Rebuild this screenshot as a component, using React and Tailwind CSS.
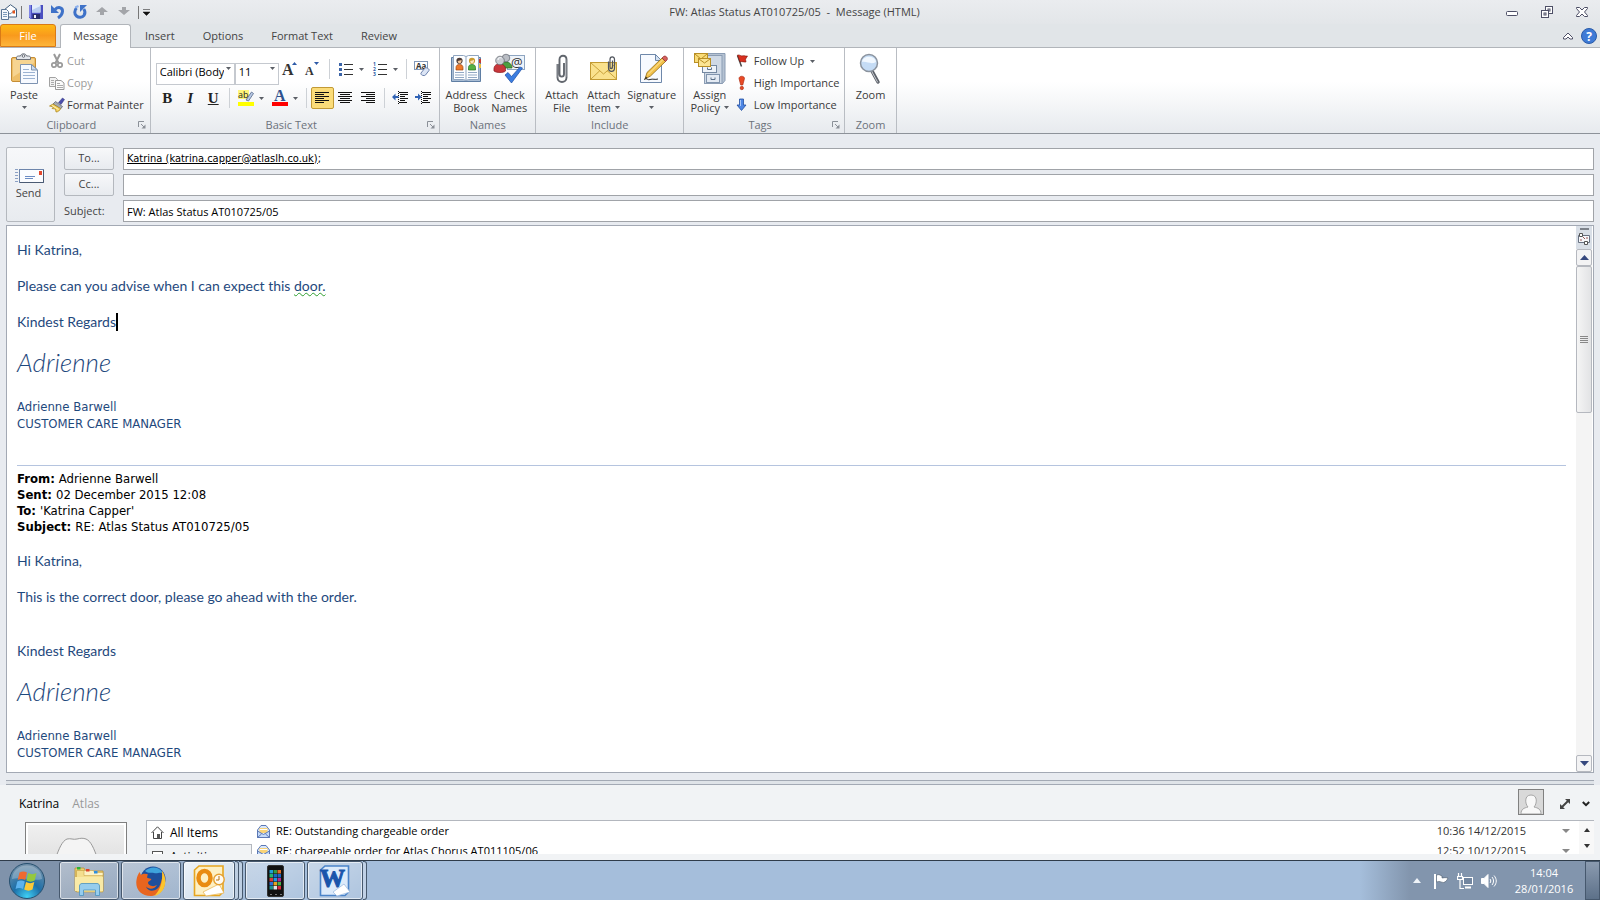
import { useState } from "react";

const uiFont = "font-['Open_Sans','Noto_Sans',sans-serif]";
const tahoma = "font-['DejaVu_Sans_Condensed','DejaVu_Sans',sans-serif]";
const calibri = "font-['Lato',sans-serif]";

const Caret = ({ className = "" }) => (
  <svg className={`h-[3px] w-[5px] shrink-0 ${className}`} viewBox="0 0 5 3">
    <path d="M0 0h5L2.5 3z" fill="#5b5f66" />
  </svg>
);

/* ---------- quick access icons ---------- */

const MailDocIcon = () => (
  <svg className="h-4 w-4" viewBox="0 0 16 16">
    <path d="M3 6 9.500 .7 15.500 5v8H3z" fill="#fff" stroke="#44607f" />
    <path d="m3 6 6 4 6.500-5" fill="none" stroke="#6f8dae" />
    <rect x="11.500" y="6.500" width="2.500" height="3" fill="#e2541b" />
    <path d="M.5 5.500h5l2 2v8h-7z" fill="#f4f8fc" stroke="#5a7594" />
    <path d="M2 8.500h4M2 10.500h4M2 12.500h4" stroke="#7f9cbb" />
  </svg>
);

const SaveIcon = () => (
  <svg className="h-4 w-4" viewBox="0 0 16 16">
    <path d="M1 1h14v14H2.500L1 13.500z" fill="#4a4fc0" />
    <path d="M1 1h2v13.500L1 13z" fill="#7f86e6" />
    <rect x="4" y="1" width="8.500" height="7.500" fill="#e4eefb" />
    <path d="M4 6 12.500 2v6.500H4z" fill="#b8cdf0" />
    <rect x="4.500" y="10" width="7.500" height="5" fill="#2a2f6d" />
    <rect x="6" y="11" width="2" height="3" fill="#f3f5fa" />
  </svg>
);

const UndoIcon = () => (
  <svg className="h-4 w-4" viewBox="0 0 16 16">
    <path d="M5 5.500C8 2.500 12.800 3 12.500 7.500c-.2 2.500-1.700 4.700-4.500 6.500" fill="none" stroke="#3f72c8" strokeWidth="3" />
    <path d="M1 1v8h8z" fill="#3f72c8" />
  </svg>
);

const RedoIcon = () => (
  <svg className="h-4 w-4" viewBox="0 0 16 16">
    <path d="M4.500 4C2.200 6.500 2.200 10 4.500 12c2.200 1.900 5.800 1.700 7.500-.6 1.500-2.200 1.200-4.400-.2-6.400" fill="none" stroke="#3f72c8" strokeWidth="3" />
    <path d="M8 1h7L8 8z" fill="#3f72c8" />
    <path d="M3.200 3.500 6.500 2" stroke="#8cb0ec" strokeWidth="2" />
  </svg>
);

const ArrowBlock = ({ down }) => (
  <svg className="h-3 w-3" viewBox="0 0 12 12">
    <path
      d={down ? "M4 1h4v3h4L6 9 0 4h4z" : "M4 9h4V6h4L6 1 0 6h4z"}
      fill="#a3a5a9"
    />
  </svg>
);

/* ---------- ribbon icons ---------- */

const PasteIcon = () => (
  <svg className="h-8 w-8" viewBox="0 0 32 32">
    <rect x="3.500" y="4.500" width="24" height="24" rx="1.500" fill="#eebf6a" stroke="#c58d35" />
    <path d="M5 6h21v4L5 24z" fill="#f6d491" />
    <path d="M8.500 6.500V4.500c0-1 1-1.500 2-1.500h2c.5-3 5.500-3 6 0h2c1 0 2 .5 2 1.500v2z" fill="#e4e7ec" stroke="#6b7079" />
    <circle cx="15.500" cy="3" r="1.300" fill="#fff" stroke="#6b7079" />
    <path d="M12.500 11.500h11l6 5.500v13.500h-17z" fill="#f7faff" stroke="#7d93b1" />
    <path d="M23.500 11.500V17h6z" fill="#cddcf0" stroke="#7d93b1" />
    <path d="M15 16.500h6M15 19.500h12M15 22.500h12M15 25.500h12" stroke="#9cb3d2" />
  </svg>
);

const CutIcon = () => (
  <svg className="h-4 w-4" viewBox="0 0 16 16" fill="none" stroke="#9a9a9a">
    <path d="m5 1 4.500 9M11 1 6.500 10" strokeWidth="2" />
    <circle cx="5" cy="12" r="2.200" strokeWidth="1.700" />
    <circle cx="11" cy="12" r="2.200" strokeWidth="1.700" />
  </svg>
);

const CopyIcon = () => (
  <svg className="h-4 w-4" viewBox="0 0 16 16">
    <path d="M.5 2.500h6l2 2v7h-8z" fill="#f2f2f2" stroke="#a2a2a2" />
    <path d="M6.500 5.500h5.500l3 2.500v6.500H6.500z" fill="#fbfbfb" stroke="#999" />
    <path d="M2 5.500h3M2 7.500h3M2 9.500h3M8 8.500h3M8 10.500h6M8 12.500h6" stroke="#aaa" />
  </svg>
);

const PainterIcon = () => (
  <svg className="h-4 w-4" viewBox="0 0 16 16">
    <path d="m9.500 5.500 4-4.500 2 1.500-3.500 5z" fill="#4b4fae" stroke="#2d2f77" strokeWidth=".5" />
    <path d="m6.500 4.500 7 5-2 2.500-7.500-5z" fill="#a4a9b1" stroke="#555b65" strokeWidth=".7" />
    <path d="M4 7 .5 9l4 1-1.500 1.500 3.500.5L7 15c2 0 4-1.500 4.500-3.500z" fill="#f4d05c" stroke="#a58018" strokeWidth=".7" />
    <path d="m3 8.500 6.500 4" stroke="#fff3b8" />
  </svg>
);

const AddressBookIcon = () => (
  <svg className="h-8 w-8" viewBox="0 0 32 32">
    <path d="M1.500 4.500h29v24h-29z" fill="#a9bdd4" stroke="#5f7ea3" />
    <path d="M3.500 2.500h10l2.500 1 2.500-1h10v24h-10l-2.500 1-2.500-1h-10z" fill="#fdfeff" stroke="#8fa5c0" />
    <path d="M16 3.500v24" stroke="#8fa5c0" />
    <path d="M29 6h2v4h-2z" fill="#c83a2c" />
    <path d="M29 11h2v4h-2z" fill="#edc041" />
    <path d="M6 17v-2.500c0-2 1.300-3 3.500-3s3.500 1 3.500 3V17z" fill="#ef7a2a" stroke="#9e4713" strokeWidth=".7" />
    <circle cx="9.500" cy="7.800" r="3.100" fill="#4b3a35" />
    <path d="M7.700 8c1.500 0 2.800-.5 3.800-1.200.6 4-3.600 5.200-3.800 1.200z" fill="#f6c99e" />
    <path d="M18.500 17v-2.500c0-2 1.300-3 3.500-3s3.500 1 3.500 3V17z" fill="#56b043" stroke="#24701f" strokeWidth=".7" />
    <circle cx="22" cy="7.800" r="3.100" fill="#c99a2e" />
    <path d="M20.200 8c1.500 0 2.800-.5 3.800-1.200.6 4-3.600 5.200-3.800 1.200z" fill="#fbe3c0" />
    <path d="M5 19.500h9M5 22h9M5 24.500h9M18 19.500h9M18 22h9M18 24.500h9" stroke="#93a9c4" />
  </svg>
);

const CheckNamesIcon = () => (
  <svg className="h-8 w-8" viewBox="0 0 32 32">
    <rect x="14.500" y="2.500" width="17" height="14" fill="#eef4fb" stroke="#8ea5c1" />
    <path d="M8 15c0-4 2-6 5-6s6 2 6 6z" fill="#4c9e41" stroke="#236a20" strokeWidth=".7" />
    <circle cx="13" cy="5" r="3.800" fill="#b9bdc4" stroke="#5e636b" strokeWidth=".7" />
    <path d="M1 18c-.5-5 1.500-7 5.500-7s6.500 2 6 7c-2 2-9 2-11.500 0z" fill="#c9373b" stroke="#86171d" strokeWidth=".7" />
    <circle cx="7" cy="7.500" r="4.300" fill="#c9cdd3" stroke="#5e636b" strokeWidth=".7" />
    <path d="M5 7c0-2 2-3 3.500-2" stroke="#fff" fill="none" />
    <text x="18" y="13.500" fontSize="13" fontFamily="Open Sans" fill="#333">@</text>
    <path d="m12 22 3-2.500 3.500 4L27 14l2.500 1-11 15z" fill="#3b7de0" stroke="#1e4fa5" strokeWidth=".7" />
  </svg>
);

const ClipIcon = () => (
  <svg className="h-8 w-8" viewBox="0 0 32 32" fill="none">
    <path d="M11.500 11v13.500c0 6 9 6 9 0V6.500c0-5-7-5-7 0V21c0 3.500 4.500 3.500 4.500 0V10" stroke="#61666d" strokeWidth="1.900" />
    <path d="M11 11v13.500M20 6.500V24" stroke="#b9bdc4" strokeWidth=".6" />
  </svg>
);

const AttachItemIcon = () => (
  <svg className="h-8 w-8" viewBox="0 0 32 32">
    <rect x="2.500" y="9.500" width="26" height="17" fill="#fae28d" stroke="#c29b33" />
    <path d="M3 26 12 17.500M28.500 26 19 17.500M3 10l12.500 11L28.500 10" fill="none" stroke="#c9a23b" />
    <path d="M20.500 8.500V15c0 4.500 6 4.500 6 0V6.500c0-3.500-4.500-3.500-4.500 0V14c0 2.200 2.500 2.200 2.500 0V7.500" fill="none" stroke="#4f545c" strokeWidth="1.200" />
  </svg>
);

const SignatureIcon = () => (
  <svg className="h-8 w-8" viewBox="0 0 32 32">
    <path d="M4.500 1.500h15l6 6v22h-21z" fill="#f7faff" stroke="#6e88aa" />
    <path d="M19.500 1.500v6h6z" fill="#d3e0f1" stroke="#6e88aa" />
    <path d="M8 26.500c3-2 3 1 6 0s5 .5 8-.5" fill="none" stroke="#2a2a2a" />
    <path d="m9 26 2-6.500L26 5l3.500 3.500L14.500 23z" fill="#f2c14a" stroke="#8f6a14" strokeWidth=".8" />
    <path d="m12 21.500 15-15" stroke="#fde9a6" />
    <path d="m26 5 1.500-1.500c2-1.500 5 1.500 3.500 3.500l-1.500 1.500z" fill="#d4605d" stroke="#8c2b2a" strokeWidth=".7" />
    <path d="m9 26 .8-2.500 1.700 1.700z" fill="#222" />
  </svg>
);

const PolicyIcon = () => (
  <svg className="h-8 w-8" viewBox="0 0 32 32">
    <path d="M10.500 2.500 13 .5h18v27l-2.500 3h-18z" fill="#b5c2d2" stroke="#8b9db4" />
    <rect x="10.500" y="2.500" width="17.500" height="28" fill="#cfd9e5" stroke="#8b9db4" />
    <rect x="8.500" y="12.500" width="14" height="7" fill="#eef3f9" stroke="#7488a1" />
    <path d="M13.500 14.500v2h4v-2" fill="none" stroke="#5b7089" />
    <rect x="12.500" y="21.500" width="13" height="8" fill="#e3eaf3" stroke="#8094ad" />
    <path d="M17 24.500v2h4v-2" fill="none" stroke="#5b7089" />
    <rect x=".5" y=".5" width="13" height="9" fill="#f9dc78" stroke="#b98f25" />
    <path d="m1 1 6 5 6-5" fill="none" stroke="#b98f25" />
    <rect x="4.500" y="5.500" width="12" height="8" fill="#fbe594" stroke="#b98f25" />
    <path d="m5 6 5.500 4L16 6" fill="none" stroke="#b98f25" />
  </svg>
);

const FlagIcon = () => (
  <svg className="h-4 w-4" viewBox="0 0 16 16">
    <path d="m1.500 2.500 4 11" stroke="#4a4a4a" strokeWidth="1.500" />
    <path d="M1.500 2c2.500-.5 3.500 1.500 5.500.8C9 2.200 9 3.500 11.500 3l-2 3.200L10 9C8 9.500 6.500 8 4 9z" fill="#d9301f" stroke="#7c150c" strokeWidth=".6" />
  </svg>
);

const HighIcon = () => (
  <svg className="h-4 w-4" viewBox="0 0 16 16">
    <path d="M3 3.500C3 .5 8.500.5 8.500 3.500L6.800 10H4.700z" fill="#e84a26" stroke="#a5260d" strokeWidth=".6" />
    <circle cx="5.800" cy="13" r="1.700" fill="#e84a26" stroke="#a5260d" strokeWidth=".6" />
  </svg>
);

const LowIcon = () => (
  <svg className="h-4 w-4" viewBox="0 0 16 16">
    <path d="M3.500 2h4v6H10l-4.500 5.500L1 8h2.500z" fill="#4e86e4" stroke="#234f9f" strokeWidth=".8" />
    <path d="M4.500 3v6" stroke="#a8c7f8" />
  </svg>
);

const ZoomIcon = () => (
  <svg className="h-8 w-8" viewBox="0 0 32 32">
    <path d="m17 18 6 11" stroke="#5d626a" strokeWidth="3.500" strokeLinecap="round" />
    <path d="m16.500 18 6 11" stroke="#c7cbd1" strokeLinecap="round" />
    <circle cx="14" cy="10" r="8.500" fill="#c5dcf5" stroke="#8b939e" strokeWidth="1.500" />
    <path d="M7 9c1-7 13-7 14 0-5 3-9-1-14 0z" fill="#f1f8ff" />
  </svg>
);

const FontSizeIcon = ({ grow }) => (
  <svg className="h-4 w-4 overflow-visible" viewBox="0 0 16 16">
    <text x="0" y="14" fontSize={grow ? 16 : 12} fontWeight="700" fontFamily="Liberation Serif" fill="#333">A</text>
    <path d={grow ? "M10 4h5l-2.500-3z" : "M9 1h5l-2.500 3z"} fill="#2d5aa8" />
  </svg>
);

const ListIcon = ({ numbered }) => (
  <svg className="h-4 w-4 overflow-visible" viewBox="0 0 16 16">
    {numbered ? (
      <g fontSize="5" fontFamily="Open Sans" fontWeight="700" fill="#2b57a4">
        <text x="1" y="5">1</text>
        <text x="1" y="10">2</text>
        <text x="1" y="15">3</text>
      </g>
    ) : (
      <path d="M1 2h3v3H1zM1 7h3v3H1zM1 12h3v3H1z" fill="#3b64a8" />
    )}
    <path d="M6 3.500h9M6 8.500h9M6 13.500h9" stroke="#333" />
  </svg>
);

const ClearIcon = () => (
  <svg className="h-4 w-4 overflow-visible" viewBox="0 0 16 16">
    <rect x=".5" y=".5" width="13" height="8" fill="#fff" stroke="#8298b8" />
    <text x="2" y="7.500" fontSize="8" fontWeight="700" fontFamily="Open Sans" fill="#333">Aa</text>
    <path d="m7 12 4-5c1-1 5 1 4 2.500L11.500 14c-1 1.500-5.500 0-4.500-2z" fill="#dce5f5" stroke="#6c82ad" />
  </svg>
);

const HighlightIcon = () => (
  <svg className="h-4 w-4 overflow-visible" viewBox="0 0 16 16">
    <rect x="0" y="0" width="11" height="9" fill="#fff67a" />
    <text x="0" y="8" fontSize="9" fontFamily="Open Sans" fill="#222">ab</text>
    <path d="m8 10 5.500-8 2 1.500L10.500 11z" fill="#b8c8e4" stroke="#56698c" strokeWidth=".8" />
    <rect x="0" y="12" width="16" height="4" fill="#ff0" />
  </svg>
);

const FontColorIcon = () => (
  <svg className="h-4 w-4 overflow-visible" viewBox="0 0 16 16">
    <text x="2" y="11" fontSize="16" fontWeight="700" fontFamily="Liberation Serif" fill="#2f528f">A</text>
    <rect x="0" y="12" width="16" height="4" fill="#f00" />
  </svg>
);

const alignPaths = {
  left: "M1 2.500h14M1 4.500h9M1 6.500h14M1 8.500h9M1 10.500h14M1 12.500h9",
  center: "M1 2.500h14M3 4.500h10M1 6.500h14M3 8.500h10M1 10.500h14M3 12.500h10",
  right: "M1 2.500h14M6 4.500h9M1 6.500h14M6 8.500h9M1 10.500h14M6 12.500h9",
};

const AlignIcon = ({ side }) => (
  <svg className="h-4 w-4" viewBox="0 0 16 16">
    <path d={alignPaths[side]} stroke="#111" />
  </svg>
);

const IndentIcon = ({ increase }) => (
  <svg className="h-4 w-4" viewBox="0 0 16 16">
    <path d="M7 2.500h9M8 4.500h8M8 6.500h5M8 8.500h8M8 10.500h5M7 12.500h8" stroke="#111" />
    <path d="M6.500 1v14" stroke="#111" strokeDasharray="1 1" />
    <path d={increase ? "M0 6h3V3.500L6.500 7 3 10.500V8H0z" : "M6.500 6h-3V3.500L0 7l3.500 3.500V8h3z"} fill="#2f62b5" />
  </svg>
);

const LauncherIcon = () => (
  <svg className="h-2 w-2" viewBox="0 0 8 8">
    <path d="M.5 6V.5H6M3 3l3 3" fill="none" stroke="#8b9098" />
    <path d="M7.500 3.500v4h-4z" fill="#8b9098" />
  </svg>
);

/* ---------- ribbon pieces ---------- */

const Group = ({ label, launcher, children }) => (
  <section className="flex flex-col border-r border-[#b9bdc3] pr-1 pl-[5px]">
    <div className="flex h-[69px]">{children}</div>
    <div className="flex h-4 items-center">
      <h2 className="flex-1 text-center text-[11px] leading-4 font-normal text-[#6c727b]">{label}</h2>
      {launcher && (
        <button type="button" aria-label={`${label} options`}>
          <LauncherIcon />
        </button>
      )}
    </div>
  </section>
);

const BigButton = ({ icon, lines, caret, width = "w-[43px]" }) => (
  <button type="button" className={`flex ${width} flex-col items-center pt-[5px]`}>
    {icon}
    <span className="mt-[3px] text-[11px] leading-[13px] whitespace-nowrap">{lines[0]}</span>
    <span className="flex h-[13px] items-center gap-1 text-[11px] leading-[13px] whitespace-nowrap">
      {lines[1]}
      {caret && <Caret />}
    </span>
  </button>
);

const SmallButton = ({ icon, label, caret, disabled }) => (
  <button
    type="button"
    disabled={disabled}
    className="flex h-[22px] items-center gap-[2px] text-[11px] whitespace-nowrap disabled:text-[#9b9b9b]"
  >
    {icon}
    {label}
    {caret && <Caret className="ml-1" />}
  </button>
);

const Tool = ({ label, caret, active, onClick, children }) => (
  <button
    type="button"
    aria-label={label}
    onClick={onClick}
    className={`flex h-[22px] items-center justify-center rounded-[2px] ${caret ? "w-[34px] gap-[5px]" : "w-[23px]"} ${
      active ? "border border-[#c29a35] bg-[#fbdc79]" : ""
    }`}
  >
    {children}
    {caret && <Caret />}
  </button>
);

const Sep = () => (
  <span className="flex w-[9px] justify-center">
    <span className="h-5 w-px bg-[#cdd1d6]" />
  </span>
);

const Picker = ({ label, value, width }) => (
  <div className={`relative h-[22px] ${width}`}>
    <select
      aria-label={label}
      defaultValue={value}
      className="h-full w-full appearance-none overflow-hidden border border-[#c5c9cf] bg-white pr-[10px] pb-1 pl-[3px] text-[11px] text-black"
    >
      <option>{value}</option>
    </select>
    <Caret className="pointer-events-none absolute top-[9px] right-1" />
  </div>
);

const Ribbon = () => {
  const [align, setAlign] = useState("left");

  return (
    <div className="flex h-[86px] shrink-0 border-b border-[#8d9299] bg-linear-to-b from-white from-40% to-[#e7eaee]">
      <Group label="Clipboard" launcher>
        <BigButton icon={<PasteIcon />} lines={["Paste"]} caret width="w-[38px]" />
        <div className="ml-[6px] pt-[2px] pr-[2px]">
          <SmallButton icon={<CutIcon />} label="Cut" disabled />
          <SmallButton icon={<CopyIcon />} label="Copy" disabled />
          <SmallButton icon={<PainterIcon />} label="Format Painter" />
        </div>
      </Group>
      <Group label="Basic Text" launcher>
        <div className="flex flex-col gap-[7px] pt-[10px]">
          <div className="flex items-center">
            <Picker label="Font" value="Calibri (Body)" width="w-[79px]" />
            <Picker label="Font size" value="11" width="w-11" />
            <Tool label="Grow font"><FontSizeIcon grow /></Tool>
            <Tool label="Shrink font"><FontSizeIcon /></Tool>
            <Sep />
            <Tool label="Bullets" caret><ListIcon /></Tool>
            <Tool label="Numbering" caret><ListIcon numbered /></Tool>
            <Sep />
            <Tool label="Clear formatting"><ClearIcon /></Tool>
          </div>
          <div className="flex items-center font-['Liberation_Serif',serif] text-[15px] text-[#222]">
            <Tool label="Bold"><b>B</b></Tool>
            <Tool label="Italic"><b className="italic">I</b></Tool>
            <Tool label="Underline"><b className="underline">U</b></Tool>
            <Sep />
            <Tool label="Highlight" caret><HighlightIcon /></Tool>
            <Tool label="Font colour" caret><FontColorIcon /></Tool>
            <Sep />
            {["left", "center", "right"].map((side) => (
              <Tool key={side} label={`Align ${side}`} active={align === side} onClick={() => setAlign(side)}>
                <AlignIcon side={side} />
              </Tool>
            ))}
            <Sep />
            <Tool label="Decrease indent"><IndentIcon /></Tool>
            <Tool label="Increase indent"><IndentIcon increase /></Tool>
          </div>
        </div>
      </Group>
      <Group label="Names">
        <BigButton icon={<AddressBookIcon />} lines={["Address", "Book"]} />
        <BigButton icon={<CheckNamesIcon />} lines={["Check", "Names"]} />
      </Group>
      <Group label="Include">
        <BigButton icon={<ClipIcon />} lines={["Attach", "File"]} width="w-[42px]" />
        <BigButton icon={<AttachItemIcon />} lines={["Attach", "Item"]} caret width="w-[42px]" />
        <BigButton icon={<SignatureIcon />} lines={["Signature"]} caret width="w-[54px]" />
      </Group>
      <Group label="Tags" launcher>
        <BigButton icon={<PolicyIcon />} lines={["Assign", "Policy"]} caret width="w-[42px]" />
        <div className="ml-[5px] pt-[2px]">
          <SmallButton icon={<FlagIcon />} label="Follow Up" caret />
          <SmallButton icon={<HighIcon />} label="High Importance" />
          <SmallButton icon={<LowIcon />} label="Low Importance" />
        </div>
      </Group>
      <Group label="Zoom">
        <BigButton icon={<ZoomIcon />} lines={["Zoom"]} width="w-[42px]" />
      </Group>
    </div>
  );
};

const TitleBar = () => (
  <header className="flex h-6 shrink-0 items-center bg-linear-to-b from-[#eaecef] to-[#e3e6e9] px-px">
    <div className="flex flex-1 items-center">
      <MailDocIcon />
      <span className="mr-[6px] ml-1 h-[13px] w-px bg-[#777]" />
      <div className="flex items-center gap-[6px]">
        <button type="button" aria-label="Save"><SaveIcon /></button>
        <button type="button" aria-label="Undo"><UndoIcon /></button>
        <button type="button" aria-label="Redo"><RedoIcon /></button>
        <button type="button" aria-label="Previous item" className="px-[2px]"><ArrowBlock /></button>
        <button type="button" aria-label="Next item" className="px-[2px]"><ArrowBlock down /></button>
      </div>
      <span className="mr-1 ml-[6px] h-[13px] w-px bg-[#777]" />
      <button type="button" aria-label="Customise toolbar">
        <svg className="h-[7px] w-[7px]" viewBox="0 0 7 7">
          <path d="M0 .5h7M0 3h7L3.500 6.500z" fill="#111" stroke="#111" strokeWidth=".5" />
        </svg>
      </button>
    </div>
    <h1 className="text-[11px] font-normal whitespace-pre text-[#444]">FW: Atlas Status AT010725/05  -  Message (HTML)</h1>
    <div className="flex flex-1 items-center justify-end gap-[23px] pr-[11px]">
      <button type="button" aria-label="Minimise">
        <svg className="h-3 w-3" viewBox="0 0 12 12"><rect x=".5" y="5.500" width="11" height="4" rx="1" fill="#fff" stroke="#4d4f66" /></svg>
      </button>
      <button type="button" aria-label="Restore">
        <svg className="h-3 w-3" viewBox="0 0 12 12" fill="#fff" stroke="#4d4f66">
          <rect x="4.500" y=".5" width="7" height="7" />
          <rect x="7" y="3" width="2" height="2" />
          <rect x=".5" y="4.500" width="7" height="7" />
          <rect x="3" y="7" width="2" height="2" />
        </svg>
      </button>
      <button type="button" aria-label="Close">
        <svg className="h-3 w-3" viewBox="0 0 12 12">
          <path d="M.5 1.500h3L6 4l2.500-2.500h3v1L8.500 6l3 3.500v1h-3L6 8l-2.500 2.500h-3v-1L3.500 6l-3-3.500z" fill="#fff" stroke="#4d4f66" />
        </svg>
      </button>
    </div>
  </header>
);

const Tabs = () => (
  <nav className="flex h-6 shrink-0 items-end border-b border-[#b1b5ba] bg-[#e1e5e8] text-[11px] text-[#444]">
    <button
      type="button"
      className="h-[23px] w-14 rounded-t-[3px] border border-[#d97a16] bg-linear-to-b from-[#fdb813] via-[#f99a1c] to-[#fdb53a] pt-px text-white"
    >
      File
    </button>
    <button
      type="button"
      className="-mb-px ml-1 h-6 w-[71px] rounded-t-[3px] border border-b-0 border-[#b1b5ba] bg-white"
    >
      Message
    </button>
    {["Insert", "Options", "Format Text", "Review"].map((tab) => (
      <button key={tab} type="button" className="h-[23px] px-[14px] pt-px">
        {tab}
      </button>
    ))}
    <div className="flex h-[23px] flex-1 items-center justify-end gap-2 pr-[3px]">
      <button type="button" aria-label="Minimise the ribbon">
        <svg className="h-2 w-[10px]" viewBox="0 0 10 8">
          <path d="M.5 5.500 5 1l4.500 4.500V7H7L5 5 3 7H.5z" fill="#fff" stroke="#4d4f66" />
        </svg>
      </button>
      <button type="button" aria-label="Help">
        <svg className="h-4 w-4" viewBox="0 0 16 16">
          <circle cx="8" cy="8" r="7.500" fill="#3f7bd6" stroke="#2a5ba8" />
          <text x="8" y="12.500" textAnchor="middle" fontSize="12" fontWeight="700" fontFamily="Open Sans" fill="#fff">?</text>
        </svg>
      </button>
    </div>
  </nav>
);

const boxButton =
  "rounded-[2px] border border-[#b4b8be] bg-linear-to-b from-[#f7f8fa] to-[#e8ebef] text-[11px] text-[#444]";
const field = "flex h-[22px] items-center border border-[#a0a3a8] bg-white px-[3px] text-[11px] text-black";

const AddressForm = () => (
  <form className="flex shrink-0 gap-[9px] px-[6px] pt-[13px] pb-[3px]" onSubmit={(e) => e.preventDefault()}>
    <button type="submit" className={`${boxButton} flex w-[49px] flex-col items-center justify-center pr-1`}>
      <svg className="h-4 w-[30px]" viewBox="0 0 30 16">
        <path d="M1 1.500h3M1 4.500h3M1 7.500h3M1 10.500h3M1 13.500h3" stroke="#8ba0c4" />
        <rect x="5.500" y="1.500" width="24" height="13" fill="#fbfcff" stroke="#6d85ab" />
        <path d="M29.500 2v12.500H6" fill="none" stroke="#4a5a73" />
        <rect x="25" y="3" width="3" height="4" fill="#e2492f" />
        <path d="M11 8.500h10M11 10.500h8" stroke="#6c8cc4" />
      </svg>
      <span className="leading-[18px]">Send</span>
    </button>
    <div className="grid flex-1 grid-cols-[50px_1fr] items-end gap-x-[9px] gap-y-[3px]">
      <button type="button" className={`${boxButton} h-[23px]`}>To...</button>
      <div className={`${field} ${tahoma}`}>
        <a href="mailto:katrina.capper@atlaslh.co.uk" className="underline">
          Katrina (katrina.capper@atlaslh.co.uk)
        </a>
        ;
        <input aria-label="To" className="min-w-0 flex-1 outline-none" />
      </div>
      <button type="button" className={`${boxButton} h-[23px]`}>Cc...</button>
      <input aria-label="Cc" className={field} />
      <label htmlFor="subject" className="flex h-[23px] items-center pt-px text-[11px] text-[#444]">Subject:</label>
      <input id="subject" defaultValue="FW: Atlas Status AT010725/05" className={field} />
    </div>
  </form>
);

const Signature = () => (
  <>
    <p className="mt-[17px] mb-[22px] text-[26px] leading-7 font-light italic">Adrienne</p>
    <p className={`${tahoma} text-[13px] leading-[17px]`}>
      Adrienne Barwell
      <br />
      CUSTOMER CARE MANAGER
    </p>
  </>
);

const quoted = [
  ["From:", "Adrienne Barwell"],
  ["Sent:", "02 December 2015 12:08"],
  ["To:", "'Katrina Capper'"],
  ["Subject:", "RE: Atlas Status AT010725/05"],
];

const ScrollBar = () => (
  <div className="mr-px flex w-4 shrink-0 flex-col bg-[#f4f4f4]">
    <div className="flex h-[23px] flex-col items-center gap-[3px] bg-[#d9dfe7] pt-[2px]">
      <span className="h-[2px] w-[9px] bg-[#7d828a]" />
      <svg className="h-3 w-3" viewBox="0 0 12 12">
        <path d="M.5 2.500h11v7H.5z" fill="#f5f7fa" stroke="#687181" />
        <path d="M1.500.5h3v3h-3zM6.500 8.500h3v3h-3z" fill="#fff" stroke="#555" />
        <path d="m5 4 2 2M9 4v2M3 6v2" stroke="#955" />
      </svg>
    </div>
    <button type="button" aria-label="Scroll up" className="flex h-[17px] items-center justify-center rounded-[2px] border border-[#b5b8bf] bg-[#f3f3f4]">
      <svg className="h-[5px] w-[9px]" viewBox="0 0 9 5"><path d="M4.500 0 9 5H0z" fill="#35477d" /></svg>
    </button>
    <div className="flex h-[147px] flex-col items-center justify-center gap-px rounded-[2px] border border-[#b5b8bf] bg-linear-to-r from-[#f5f5f5] to-[#e2e3e5]">
      <span className="h-px w-2 bg-[#888]" />
      <span className="h-px w-2 bg-[#888]" />
      <span className="h-px w-2 bg-[#888]" />
      <span className="h-px w-2 bg-[#888]" />
    </div>
    <div className="flex-1" />
    <button type="button" aria-label="Scroll down" className="flex h-[17px] items-center justify-center rounded-[2px] border border-[#b5b8bf] bg-[#f3f3f4]">
      <svg className="h-[5px] w-[9px]" viewBox="0 0 9 5"><path d="M0 0h9L4.500 5z" fill="#35477d" /></svg>
    </button>
  </div>
);

const MessageBody = () => (
  <main className="mx-[6px] flex min-h-0 flex-1 border border-[#a3a9b4] bg-white">
    <article className={`${calibri} min-w-0 flex-1 overflow-hidden px-[10px] pt-[15px] text-[14px] leading-[18px] text-[#1f497d]`}>
      <p>Hi Katrina,</p>
      <p className="mt-[18px]">
        Please can you advise when I can expect this{" "}
        <span className="underline decoration-[#2e9e2e] decoration-wavy decoration-1">door.</span>
      </p>
      <p className="mt-[18px] flex">
        Kindest Regards
        <span className="h-[18px] w-[2px] bg-black" />
      </p>
      <Signature />
      <hr className="mt-[33px] mb-[5px] border-[#b5c4df]" />
      <dl className={`${tahoma} text-[13px] leading-4 text-black`}>
        {quoted.map(([name, value]) => (
          <div key={name} className="flex gap-1">
            <dt className="font-bold">{name}</dt>
            <dd>{value}</dd>
          </div>
        ))}
      </dl>
      <p className="mt-[17px]">Hi Katrina,</p>
      <p className="mt-[18px]">This is the correct door, please go ahead with the order.</p>
      <p className="mt-9">Kindest Regards</p>
      <Signature />
    </article>
    <ScrollBar />
  </main>
);

/* ---------- people pane ---------- */

const OpenMailIcon = () => (
  <svg className="h-[13px] w-[13px] shrink-0" viewBox="0 0 13 13">
    <path d="M.5 5 4 .5h5L12.500 5v7.500H.5z" fill="#d8e6fa" stroke="#5c78b4" />
    <path d="M2.500 3h8v5h-8z" fill="#f9d377" />
    <path d="M3 4.500h7" stroke="#fff" />
    <path d="m.5 6 6 3.500 6-3.500v6.500H.5z" fill="#c4dafa" stroke="#5c78b4" />
    <path d="M.5 12.500 4.500 9M12.500 12.500 8.500 9" stroke="#5c78b4" />
  </svg>
);

const mails = [
  { subject: "RE: Outstanding chargeable order", time: "10:36 14/12/2015" },
  { subject: "RE: chargeable order for Atlas Chorus AT011105/06", time: "12:52 10/12/2015" },
];

const PeoplePane = () => (
  <section className="shrink-0 bg-[#f1f3f5] pb-[6px]">
    <div className="flex h-[35px] items-center pt-[2px] pr-[10px] pl-[19px] text-[12px]">
      <span className="text-black">Katrina</span>
      <span className="ml-[13px] flex-1 text-[#999]">Atlas</span>
      <svg className="mr-4 mb-1 h-[26px] w-[26px] border border-[#808080] bg-[#d9d9d9]" viewBox="0 0 24 24">
        <path d="M2 24c0-5 3-6 7-7-3-3-4-12 3-12s6 9 3 12c4 1 7 2 7 7z" fill="#f8f8f8" stroke="#a5a5a5" />
      </svg>
      <button type="button" aria-label="Expand" className="mr-3">
        <svg className="h-[10px] w-[10px]" viewBox="0 0 10 10">
          <path d="M5 0h5v5L8.200 3.200 3.200 8.200 5 10H0V5l1.800 1.800 5-5z" fill="#444" />
        </svg>
      </button>
      <button type="button" aria-label="Collapse">
        <svg className="h-[6px] w-2" viewBox="0 0 8 6"><path d="m.8 1 3.200 3.200L7.200 1" fill="none" stroke="#222" strokeWidth="2" /></svg>
      </button>
    </div>
    <div className="flex h-[34px] overflow-hidden pr-[6px] pl-[25px]">
      <div className="mt-[2px] h-[98px] w-[102px] shrink-0 border border-[#7f7f7f] bg-white p-[2px]">
        <svg className="h-full w-full bg-linear-to-b from-[#f0f0f0] to-[#c9c9c9]" viewBox="0 0 96 92">
          <path d="M28 32c3-8 6-16 11-18 4-1 6 1 10 0s6-1 9 0c5 2 8 10 11 18l4 30H24z" fill="#f4f4f4" stroke="#999" />
        </svg>
      </div>
      <nav className="ml-[19px] w-[106px] shrink-0 text-[12px] text-black">
        <button type="button" className="flex h-[25px] w-full items-center gap-[6px] border-y border-l border-[#b3b7be] bg-white pl-1">
          <svg className="h-[13px] w-[13px]" viewBox="0 0 13 13">
            <path d="M.5 7 6.500.8l6 6.200M2.500 6v6.500h8V6" fill="#fff" stroke="#444" />
            <path d="M6 8h3v4.500H6z" fill="#555" />
          </svg>
          All Items
        </button>
        <button type="button" className="flex h-6 w-full items-center gap-[6px] border-r border-l border-[#b3b7be] pl-1">
          <svg className="h-[13px] w-[13px]" viewBox="0 0 13 13"><rect x="1.500" y=".5" width="10" height="12" fill="#fff" stroke="#555" /></svg>
          Activities
        </button>
      </nav>
      <ul className="min-w-0 flex-1 border-t border-[#b3b7be] bg-white text-[11px] text-black">
        {mails.map((mail) => (
          <li key={mail.time} className="flex h-5 items-center gap-[6px] pr-[9px] pl-[5px]">
            <OpenMailIcon />
            <a href="#mail" className="flex-1">{mail.subject}</a>
            <time className="mr-[30px] text-[#333]">{mail.time}</time>
            <svg className="h-1 w-2" viewBox="0 0 8 4"><path d="M0 0h8L4 4z" fill="#888" /></svg>
          </li>
        ))}
      </ul>
      <div className="flex w-[15px] shrink-0 flex-col items-center gap-[12px] border-t border-[#b3b7be] bg-[#f8f8f8] pt-[7px]">
        <svg className="h-1 w-[6px]" viewBox="0 0 6 4"><path d="M3 0l3 4H0z" fill="#333" /></svg>
        <svg className="h-1 w-[6px]" viewBox="0 0 6 4"><path d="M0 0h6L3 4z" fill="#333" /></svg>
      </div>
    </div>
  </section>
);

/* ---------- taskbar ---------- */

const StartOrb = () => (
  <svg className="h-9 w-9" viewBox="0 0 36 36">
    <defs>
      <radialGradient id="orb" cx=".5" cy=".95" r=".9">
        <stop offset="0" stopColor="#3fd0f5" />
        <stop offset=".45" stopColor="#1d6fa8" />
        <stop offset="1" stopColor="#6f8fa9" />
      </radialGradient>
    </defs>
    <circle cx="18" cy="18" r="17.500" fill="url(#orb)" stroke="#27506f" />
    <path d="M3 16C4 -2 32-2 33 16c-9 3-20-3-30 0z" fill="#fff" opacity=".25" />
    <path d="M10.500 9.500c2.500-1.500 5-1.500 7.500 0l-1.800 7.500c-2.500-1.500-5-1.500-7.500 0z" fill="#ef6a30" />
    <path d="M19.200 10c2.500 1.500 5.500 1.500 8.300 0l-1.800 7.500c-2.700 1.500-5.500 1.500-8.300 0z" fill="#94c83f" />
    <path d="M8.300 18.500c2.500-1.500 5-1.500 7.500 0L14 26c-2.500-1.500-5-1.500-7.500 0z" fill="#5cb2ee" />
    <path d="M17 19c2.700 1.500 5.500 1.500 8.300 0l-1.800 7.500c-2.500 1.500-5.500 1.500-8.300 0z" fill="#fcc938" />
  </svg>
);

const ExplorerIcon = () => (
  <svg className="h-8 w-8" viewBox="0 0 32 32">
    <path d="M2 3h9l1.500 3H30v20H2z" fill="#eccf6e" stroke="#b8923a" strokeWidth=".8" />
    <path d="M3.500 5.500h8l1.500 3h17V27h-26.500z" fill="#f4de8e" stroke="#c39d3f" strokeWidth=".6" />
    <path d="M11 5.500h9l2 2h8v3H11z" fill="#fdf2c4" stroke="#c39d3f" strokeWidth=".5" />
    <path d="M4 2h3.500v2.500H4z" fill="#2cb336" />
    <path d="M13 4h3.500v2.500H13z" fill="#e04328" />
    <path d="M21 6h3.500v2.500H21z" fill="#2a8fe0" />
    <path d="M2 12h28v14H2z" fill="#f9eaa6" />
    <path d="M6.500 30.500V21c0-1.500 1-2.500 2.500-2.500h15c1.500 0 2.500 1 2.500 2.500v9.500h-4V25h-12v5.500z" fill="#96cdee" stroke="#4a92bf" strokeWidth=".8" />
  </svg>
);

const FirefoxIcon = () => (
  <svg className="h-8 w-8" viewBox="0 0 32 32">
    <circle cx="18" cy="14" r="12.500" fill="#1d4f9c" />
    <path d="M10 6c5-5 14-5 18 2-4-1-6 1-9 0s-5 1-9-2z" fill="#3fa3dc" />
    <path d="M27 6c6 8 4 23-10 25C6 31.500 0 24 1.500 15 2 11 3.500 9 4.500 7l1.500 3c2-1.500 5-1.500 7-.5-1 1.500-1 3-.5 3.500 1.500.5 3 .5 4 1-1 2-3 2-3.500 3.500 0 3 5 5 9 2.500-2 4-8 5-11 1.500 1.500 6 12 6 14.500-3 2-5 2-9 1.500-12.500z" fill="#e8651f" />
    <path d="M27 6c6 8 4 22-8 25 6-5 9-14 8-25z" fill="#fbc52f" />
  </svg>
);

const OutlookIcon = () => (
  <svg className="h-8 w-8" viewBox="0 0 32 32">
    <path d="M1.500 5 6 1h24v26l-3.500 3.500h-25z" fill="#fdf0c4" stroke="#e6a51f" strokeWidth="1.600" />
    <ellipse cx="11.500" cy="13" rx="6" ry="7" fill="none" stroke="#e98c12" strokeWidth="4.500" />
    <path d="M10 27 26 19l5 9-18 3z" fill="#fff" stroke="#e9b85c" strokeWidth=".8" />
    <circle cx="26" cy="14.500" r="5.200" fill="#fffaf0" stroke="#e5a131" strokeWidth="1.400" />
    <path d="M26 11v4h-3" fill="none" stroke="#b97510" />
  </svg>
);

const tiles = [
  ["#1fa0d8", "#2f9b46", "#e0702a"],
  ["#22b573", "#1d66c1", "#1d66c1"],
  ["#d83a35", "#1d9ae0", "#b62c8f"],
  ["#2d6fd8", "#e6a223", "#49b04c"],
  ["#1d8f8a", "#dfe3e8", "#d8283c"],
];

const PhoneIcon = () => (
  <svg className="h-8 w-[17px]" viewBox="0 0 17 32">
    <rect x=".5" y=".5" width="16" height="31" rx="1.500" fill="#111" stroke="#333" />
    {tiles.map((row, y) =>
      row.map((fill, x) => <rect key={`${x}-${y}`} x={2.5 + x * 4} y={5 + y * 4} width="3.500" height="3.500" fill={fill} />)
    )}
    <path d="M3 29.500h2M8 29.500h2M13 29.500h2" stroke="#777" />
  </svg>
);

const WordIcon = () => (
  <svg className="h-8 w-8 overflow-visible" viewBox="0 0 32 32">
    <path d="M1.500 5 6 1h23.500v26L26 30.500H1.500z" fill="#dceafa" stroke="#4b84c9" strokeWidth="1.600" />
    <text x="1" y="22" fontSize="25" fontWeight="700" fontFamily="Liberation Serif" fill="#1a55ab" stroke="#1a55ab">W</text>
    <path d="m14 27 11-8 6 8-13 4z" fill="#fff" stroke="#9ebce2" strokeWidth=".8" />
  </svg>
);

const plain = "w-[60px] bg-linear-to-br from-white/40 to-white/10";

const apps = [
  { name: "Explorer", icon: <ExplorerIcon />, look: plain, layers: [] },
  { name: "Firefox", icon: <FirefoxIcon />, look: plain, layers: [] },
  { name: "Outlook", icon: <OutlookIcon />, look: "w-[52px] bg-linear-to-br from-[#edf3f9] to-[#c8d9ea]", layers: [1, 2] },
  { name: "Phone", icon: <PhoneIcon />, look: plain, layers: [] },
  { name: "Word", icon: <WordIcon />, look: "w-14 bg-linear-to-br from-white/40 to-white/10", layers: [1] },
];

const Taskbar = () => (
  <footer className="flex h-10 shrink-0 border-t border-[#2f3c4a] bg-[linear-gradient(90deg,#8093ab_0px,#8093ab_60px,#a5bedb_260px,#a5bedb_calc(100%_-_240px),#8295ad_calc(100%_-_190px),#8295ad_100%)]">
    <button type="button" aria-label="Start" className="ml-[9px] flex items-center">
      <StartOrb />
    </button>
    <div className="ml-[14px] flex gap-[2px]">
      {apps.map((app) => (
        <div key={app.name} className="flex">
          <button
            type="button"
            aria-label={app.name}
            className={`flex items-center justify-center rounded-[3px] border border-[#46586d] inset-ring inset-ring-white/60 ${app.look}`}
          >
            {app.icon}
          </button>
          {app.layers.map((layer) => (
            <span key={layer} className="w-1 rounded-r-[3px] border-y border-r border-[#46586d] bg-white/30" />
          ))}
        </div>
      ))}
    </div>
    <div className="flex flex-1 items-center justify-end text-white">
      <svg className="h-[5px] w-2" viewBox="0 0 8 5"><path d="M4 0l4 5H0z" fill="#eef3f8" /></svg>
      <svg className="ml-3 h-4 w-4" viewBox="0 0 16 16">
        <path d="M2 1v15" stroke="#fff" strokeWidth="2" />
        <path d="M3.500 2c3-1 4 .5 5.500 1v2c1.500 0 3-.8 6 0-1 2-2 4-4.500 4.500C8 9.500 7 7.500 3.500 9z" fill="#fff" stroke="#4c5a6c" strokeWidth=".6" />
      </svg>
      <svg className="ml-2 h-4 w-4" viewBox="0 0 16 16" fill="none" stroke="#fff">
        <path d="M1.500 0v4M4.500 0v4M.5 3.500h5v3h-5zM3 6v9.500h4" strokeWidth="1.200" />
        <rect x="6.500" y="4.500" width="9" height="7" fill="#7286a0" />
        <path d="M8 14.500h6" strokeWidth="2" />
      </svg>
      <svg className="ml-2 h-4 w-4" viewBox="0 0 16 16" fill="none" stroke="#fff">
        <path d="M.5 5.500H3L7 1.500v13L3 10.500H.5z" fill="#fff" />
        <path d="M9 6c1 1.200 1 2.800 0 4M11 4c2 2.500 2 5.500 0 8M13 2.500c3 3.500 3 7.500 0 11" />
      </svg>
      <time className="ml-4 flex w-[62px] flex-col text-center text-[11px] leading-4">
        <span>14:04</span>
        <span>28/01/2016</span>
      </time>
      <button
        type="button"
        aria-label="Show desktop"
        className="ml-[10px] h-full w-[15px] border border-[#46586d] bg-linear-to-b from-[#8b9bb0] to-[#5d7189]"
      />
    </div>
  </footer>
);

export default function App() {
  return (
    <div className={`${uiFont} flex h-screen flex-col overflow-hidden bg-[#e8ebf0] text-[#3b3b3b]`}>
      <TitleBar />
      <Tabs />
      <Ribbon />
      <AddressForm />
      <MessageBody />
      <div className="mx-[6px] mt-[7px] h-[5px] shrink-0 border-y border-[#a3a9b4] bg-[#dfe3e8]" />
      <PeoplePane />
      <Taskbar />
    </div>
  );
}
